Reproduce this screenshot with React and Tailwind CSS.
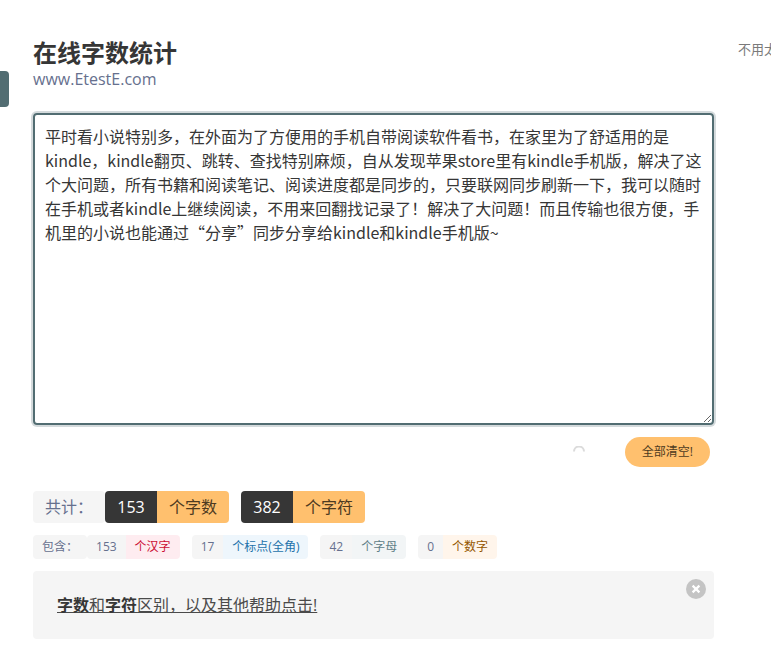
import React, { useState } from 'react';

const SAMPLE_TEXT =
  '平时看小说特别多，在外面为了方便用的手机自带阅读软件看书，在家里为了舒适用的是kindle，kindle翻页、跳转、查找特别麻烦，自从发现苹果store里有kindle手机版，解决了这个大问题，所有书籍和阅读笔记、阅读进度都是同步的，只要联网同步刷新一下，我可以随时在手机或者kindle上继续阅读，不用来回翻找记录了！解决了大问题！而且传输也很方便，手机里的小说也能通过“分享”同步分享给kindle和kindle手机版~';

const totals = [
  { count: 153, label: '个字数' },
  { count: 382, label: '个字符' }
];

const details = [
  { count: 153, label: '个汉字', color: 'bg-[#feecf0] text-[#cc0f35]' },
  { count: 17, label: '个标点(全角)', color: 'bg-[#eef6fc] text-[#1d72aa]' },
  { count: 42, label: '个字母', color: 'bg-[#f2f5f6] text-[#5f8087]' },
  { count: 0, label: '个数字', color: 'bg-[#fff5eb] text-[#945600]' }
];

const TotalTags = () => (
  <div className="flex flex-wrap gap-y-2 text-base leading-6">
    <span className="flex h-8 items-center rounded bg-[#f5f5f5] px-3 text-[#66708e]">共计：</span>
    <div className="flex gap-3">
      {totals.map(({ count, label }) => (
        <div key={label} className="flex h-8 overflow-hidden rounded">
          <span className="flex min-w-[52px] items-center justify-center bg-[#363636] px-3 text-white">{count}</span>
          <span className="flex items-center bg-[#ffc06e] px-3 text-[#4d3a21]">{label}</span>
        </div>
      ))}
    </div>
  </div>
);

const DetailTags = () => (
  <div className="mt-3 flex flex-wrap gap-y-2 text-xs">
    <span className="flex h-6 items-center rounded bg-[#f5f5f5] px-[9px] text-[#66708e]">包含：</span>
    <div className="flex flex-wrap gap-x-3 gap-y-2">
      {details.map(({ count, label, color }) => (
        <div key={label} className="flex h-6 overflow-hidden rounded">
          <span className="flex items-center bg-[#f5f5f5] px-[9px] text-[#66708e]">{count}</span>
          <span className={`flex items-center px-[9px] ${color}`}>{label}</span>
        </div>
      ))}
    </div>
  </div>
);

const HelpNotice = ({ onClose }) => (
  <div className="relative mt-3 rounded bg-[#f5f5f5] px-6 py-[22px] text-base leading-6 text-[#4a4a4a]">
    <a href="#help" className="underline">
      <strong className="font-bold text-[#363636]">字数</strong>和
      <strong className="font-bold text-[#363636]">字符</strong>区别，以及其他帮助点击!
    </a>
    <button
      type="button"
      onClick={onClose}
      aria-label="关闭"
      className="absolute top-2 right-2 flex size-5 items-center justify-center rounded-full bg-[#c4c4c4]"
    >
      <svg viewBox="0 0 20 20" className="size-5" aria-hidden="true">
        <path d="M6.6 6.6l6.8 6.8M13.4 6.6l-6.8 6.8" stroke="#fff" strokeWidth="2.2" />
      </svg>
    </button>
  </div>
);

const App = () => {
  const [text, setText] = useState(SAMPLE_TEXT);
  const [showHelp, setShowHelp] = useState(true);

  return (
    <div className="relative flex gap-6 bg-white pt-[39px] pl-[33px] font-['Open_Sans','Noto_Sans_CJK_SC',sans-serif]">
      {/* Side drawer handle */}
      <button
        type="button"
        aria-label="菜单"
        className="absolute top-[71px] left-0 h-9 w-[9px] rounded-r-sm bg-[#526d72]"
      />

      <main className="min-w-0 flex-1">
        <h1 className="text-2xl leading-7 font-bold text-[#363636]">在线字数统计</h1>
        <p className="text-base leading-6 text-[#66708e]">www.EtestE.com</p>

        <textarea
          value={text}
          onChange={(e) => setText(e.target.value)}
          aria-label="输入文字"
          spellCheck={false}
          className="mt-[22px] block h-[312px] w-full resize rounded border-2 border-[#526d72] px-[10px] py-[9px] font-['Noto_Sans_CJK_SC',sans-serif] text-base leading-6 text-[#363636] ring-2 ring-[#526d72]/25 outline-none"
        />

        <div className="mt-3 flex items-center justify-end gap-10 pr-1">
          <svg viewBox="0 0 12 12" className="size-3" aria-hidden="true">
            <path d="M1 5.5a5 5 0 0 1 10 0" fill="none" stroke="#dbdbdb" strokeWidth="2" />
          </svg>
          <button
            type="button"
            onClick={() => setText('')}
            className="h-[30px] rounded-full bg-[#ffc06e] px-[17px] text-xs text-[#4d3a21]"
          >
            全部清空!
          </button>
        </div>

        <div className="mt-6">
          <TotalTags />
          <DetailTags />
        </div>

        {showHelp && <HelpNotice onClose={() => setShowHelp(false)} />}
      </main>

      {/* Slogan runs on past the right edge */}
      <aside className="w-[33px] shrink-0 overflow-hidden text-[13px] leading-5 whitespace-nowrap text-[#7a7a7a]">
        不用太
      </aside>
    </div>
  );
};

export default App;
